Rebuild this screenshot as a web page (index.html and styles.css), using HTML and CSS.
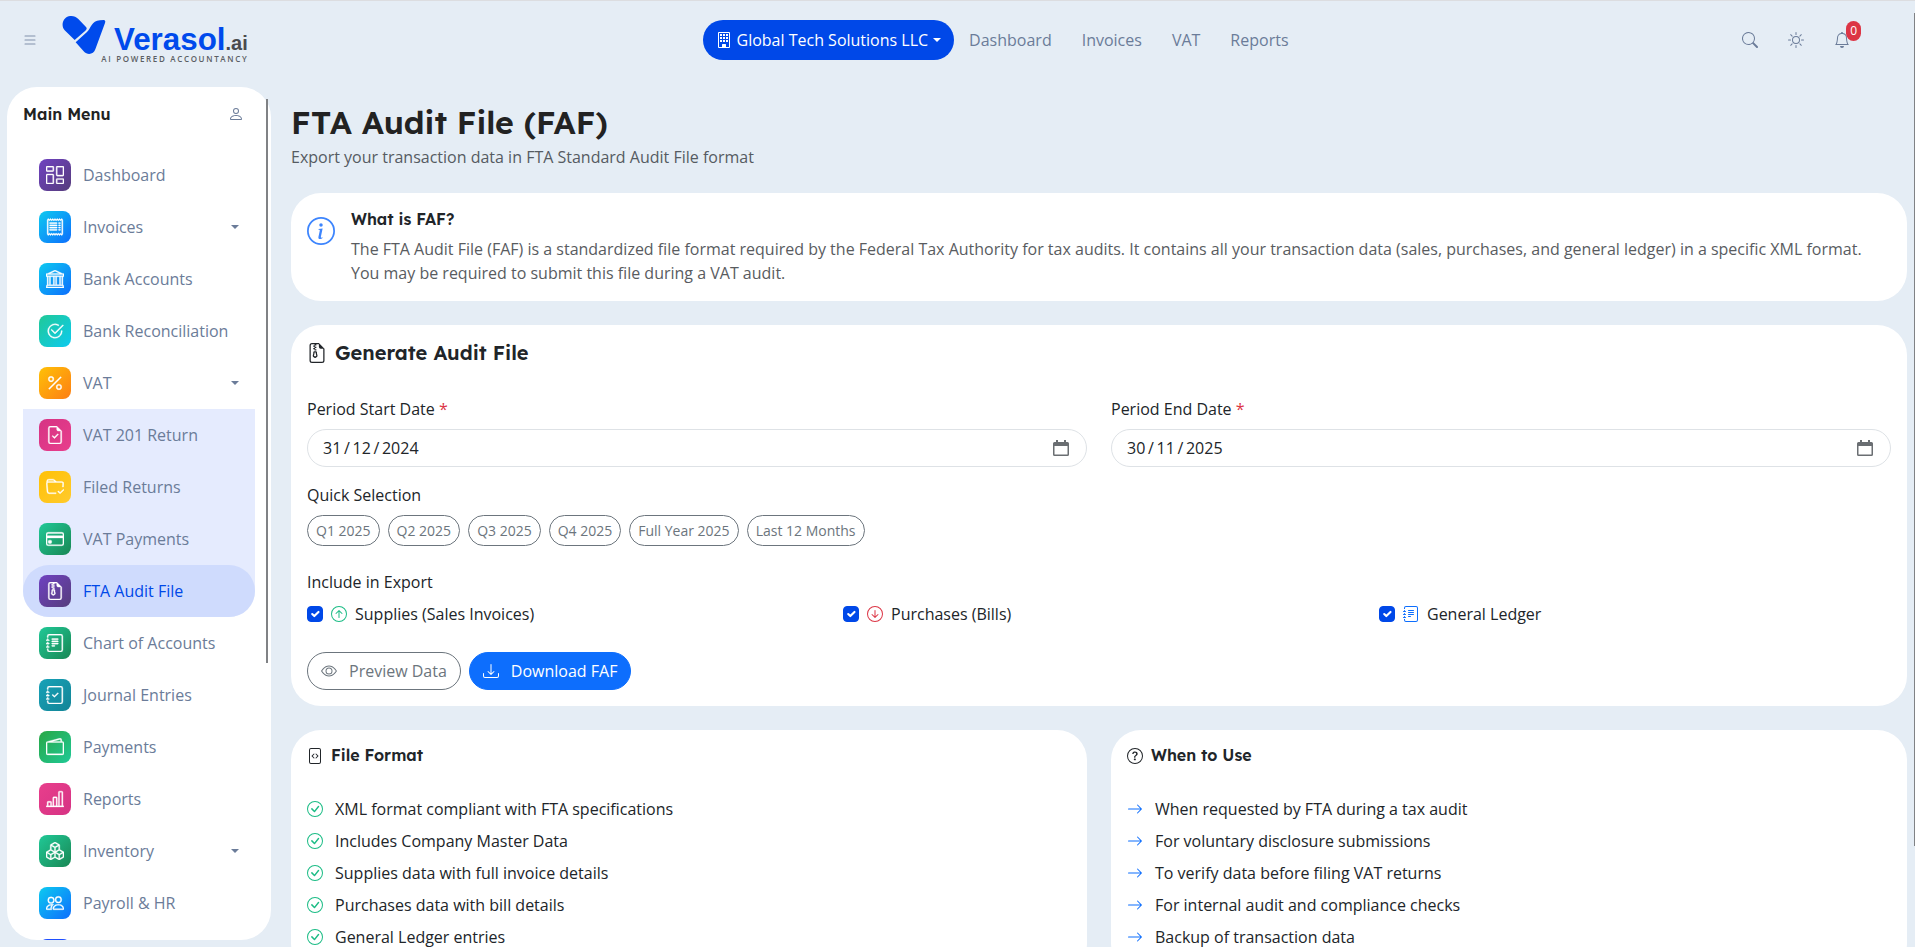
FILE: index.html
```html
<!DOCTYPE html>
<html lang="en-GB">

<head>
  <meta charset="utf-8">
  <meta name="viewport" content="width=device-width, initial-scale=1">
  <title>FTA Audit File (FAF)</title>
  <link rel="stylesheet" href="styles.css">
</head>

<body>
  <!-- icon sprite -->
  <svg class="sprite" aria-hidden="true">
    <symbol id="list" viewBox="0 0 16 16"><path d="M2.5 12a.5.5 0 0 1 .5-.5h10a.5.5 0 0 1 0 1H3a.5.5 0 0 1-.5-.5zm0-4a.5.5 0 0 1 .5-.5h10a.5.5 0 0 1 0 1H3a.5.5 0 0 1-.5-.5zm0-4a.5.5 0 0 1 .5-.5h10a.5.5 0 0 1 0 1H3a.5.5 0 0 1-.5-.5z"/></symbol>
    <symbol id="columns" viewBox="0 0 16 16"><path d="M6 1v3H1V1h5zM1 0a1 1 0 0 0-1 1v3a1 1 0 0 0 1 1h5a1 1 0 0 0 1-1V1a1 1 0 0 0-1-1H1zm14 12v3h-5v-3h5zm-5-1a1 1 0 0 0-1 1v3a1 1 0 0 0 1 1h5a1 1 0 0 0 1-1v-3a1 1 0 0 0-1-1h-5zM6 8v7H1V8h5zM1 7a1 1 0 0 0-1 1v7a1 1 0 0 0 1 1h5a1 1 0 0 0 1-1V8a1 1 0 0 0-1-1H1zm14-6v7h-5V1h5zm-5-1a1 1 0 0 0-1 1v7a1 1 0 0 0 1 1h5a1 1 0 0 0 1-1V1a1 1 0 0 0-1-1h-5z"/></symbol>
    <symbol id="receipt" viewBox="0 0 16 16"><path d="M1.92.506a.5.5 0 0 1 .434.14L3 1.293l.646-.647a.5.5 0 0 1 .708 0L5 1.293l.646-.647a.5.5 0 0 1 .708 0L7 1.293l.646-.647a.5.5 0 0 1 .708 0L9 1.293l.646-.647a.5.5 0 0 1 .708 0l.646.647.646-.647a.5.5 0 0 1 .708 0l.646.647.646-.647a.5.5 0 0 1 .801.13l.5 1A.5.5 0 0 1 15 2v12a.5.5 0 0 1-.053.224l-.5 1a.5.5 0 0 1-.8.13L13 14.707l-.646.647a.5.5 0 0 1-.708 0L11 14.707l-.646.647a.5.5 0 0 1-.708 0L9 14.707l-.646.647a.5.5 0 0 1-.708 0L7 14.707l-.646.647a.5.5 0 0 1-.708 0L5 14.707l-.646.647a.5.5 0 0 1-.708 0L3 14.707l-.646.647a.5.5 0 0 1-.801-.13l-.5-1A.5.5 0 0 1 1 14V2a.5.5 0 0 1 .053-.224l.5-1a.5.5 0 0 1 .367-.27zm.217 1.338L2 2.118v11.764l.137.274.51-.51a.5.5 0 0 1 .707 0l.646.647.646-.646a.5.5 0 0 1 .708 0l.646.646.646-.646a.5.5 0 0 1 .708 0l.646.646.646-.646a.5.5 0 0 1 .708 0l.646.646.646-.646a.5.5 0 0 1 .708 0l.646.646.646-.646a.5.5 0 0 1 .708 0l.509.509.137-.274V2.118l-.137-.274-.51.51a.5.5 0 0 1-.707 0L12 1.707l-.646.647a.5.5 0 0 1-.708 0L10 1.707l-.646.647a.5.5 0 0 1-.708 0L8 1.707l-.646.647a.5.5 0 0 1-.708 0L6 1.707l-.646.647a.5.5 0 0 1-.708 0L4 1.707l-.646.647a.5.5 0 0 1-.708 0l-.509-.51z"/><path d="M3 4.5a.5.5 0 0 1 .5-.5h6a.5.5 0 1 1 0 1h-6a.5.5 0 0 1-.5-.5zm0 2a.5.5 0 0 1 .5-.5h6a.5.5 0 1 1 0 1h-6a.5.5 0 0 1-.5-.5zm0 2a.5.5 0 0 1 .5-.5h6a.5.5 0 1 1 0 1h-6a.5.5 0 0 1-.5-.5zm0 2a.5.5 0 0 1 .5-.5h6a.5.5 0 0 1 0 1h-6a.5.5 0 0 1-.5-.5zm8-6a.5.5 0 0 1 .5-.5h1a.5.5 0 0 1 0 1h-1a.5.5 0 0 1-.5-.5zm0 2a.5.5 0 0 1 .5-.5h1a.5.5 0 0 1 0 1h-1a.5.5 0 0 1-.5-.5zm0 2a.5.5 0 0 1 .5-.5h1a.5.5 0 0 1 0 1h-1a.5.5 0 0 1-.5-.5zm0 2a.5.5 0 0 1 .5-.5h1a.5.5 0 0 1 0 1h-1a.5.5 0 0 1-.5-.5z"/></symbol>
    <symbol id="bank" viewBox="0 0 16 16"><path d="m8 0 6.61 3h.89a.5.5 0 0 1 .5.5v2a.5.5 0 0 1-.5.5H15v7a.5.5 0 0 1 .485.38l.5 2a.498.498 0 0 1-.485.62H.5a.498.498 0 0 1-.485-.62l.5-2A.501.501 0 0 1 1 13V6H.5a.5.5 0 0 1-.5-.5v-2A.5.5 0 0 1 .5 3h.89L8 0ZM3.777 3h8.447L8 1 3.777 3ZM2 6v7h1V6H2Zm2 0v7h2.5V6H4Zm3.5 0v7h1V6h-1Zm2 0v7H12V6H9.5ZM13 6v7h1V6h-1Zm2-1V4H1v1h14Zm-.39 9H1.39l-.25 1h13.72l-.25-1Z"/></symbol>
    <symbol id="check2" viewBox="0 0 16 16"><path d="M2.5 8a5.5 5.5 0 0 1 8.25-4.764.5.5 0 0 0 .5-.866A6.5 6.5 0 1 0 14.5 8a.5.5 0 0 0-1 0 5.5 5.5 0 1 1-11 0z"/><path d="M15.354 3.354a.5.5 0 0 0-.708-.708L8 9.293 5.354 6.646a.5.5 0 1 0-.708.708l3 3a.5.5 0 0 0 .708 0l7-7z"/></symbol>
    <symbol id="percent" viewBox="0 0 16 16"><path d="M13.442 2.558a.625.625 0 0 1 0 .884l-10 10a.625.625 0 1 1-.884-.884l10-10a.625.625 0 0 1 .884 0zM4.5 6a1.5 1.5 0 1 1 0-3 1.5 1.5 0 0 1 0 3zm0 1a2.5 2.5 0 1 0 0-5 2.5 2.5 0 0 0 0 5zm7 6a1.5 1.5 0 1 1 0-3 1.5 1.5 0 0 1 0 3zm0 1a2.5 2.5 0 1 0 0-5 2.5 2.5 0 0 0 0 5z"/></symbol>
    <symbol id="file-check" viewBox="0 0 16 16"><path d="M10.854 7.854a.5.5 0 0 0-.708-.708L7.5 9.793 6.354 8.646a.5.5 0 1 0-.708.708l1.5 1.5a.5.5 0 0 0 .708 0l3-3z"/><path d="M14 14V4.5L9.5 0H4a2 2 0 0 0-2 2v12a2 2 0 0 0 2 2h8a2 2 0 0 0 2-2zM9.5 3A1.5 1.5 0 0 0 11 4.5h2V14a1 1 0 0 1-1 1H4a1 1 0 0 1-1-1V2a1 1 0 0 1 1-1h5.5v2z"/></symbol>
    <symbol id="folder-check" viewBox="0 0 16 16"><path d="m.5 3 .04.87a1.99 1.99 0 0 0-.342 1.311l.637 7A2 2 0 0 0 2.826 14H9v-1H2.826a1 1 0 0 1-.995-.91l-.637-7A1 1 0 0 1 2.19 4h11.62a1 1 0 0 1 .996 1.09L14.54 8h1.005l.256-2.819A2 2 0 0 0 13.81 3H9.828a2 2 0 0 1-1.414-.586l-.828-.828A2 2 0 0 0 6.172 1H2.5a2 2 0 0 0-2 2zm5.672-1a1 1 0 0 1 .707.293L7.586 3H2.19c-.24 0-.47.042-.683.12L1.5 2.98a1 1 0 0 1 1-.98h3.672z"/><path d="M15.854 10.146a.5.5 0 0 1 0 .708l-3 3a.5.5 0 0 1-.708 0l-1.5-1.5a.5.5 0 0 1 .708-.708l1.146 1.147 2.646-2.647a.5.5 0 0 1 .708 0z"/></symbol>
    <symbol id="card" viewBox="0 0 16 16"><path d="M0 4a2 2 0 0 1 2-2h12a2 2 0 0 1 2 2v8a2 2 0 0 1-2 2H2a2 2 0 0 1-2-2V4zm2-1a1 1 0 0 0-1 1v1h14V4a1 1 0 0 0-1-1H2zm13 4H1v5a1 1 0 0 0 1 1h12a1 1 0 0 0 1-1V7z"/><path d="M2 10a1 1 0 0 1 1-1h1a1 1 0 0 1 1 1v1a1 1 0 0 1-1 1H3a1 1 0 0 1-1-1v-1z"/></symbol>
    <symbol id="zip" viewBox="0 0 16 16"><path d="M5 7.5a1 1 0 0 1 1-1h1a1 1 0 0 1 1 1v.938l.4 1.599a1 1 0 0 1-.416 1.074l-.93.62a1 1 0 0 1-1.11 0l-.929-.62a1 1 0 0 1-.415-1.074L5 8.438V7.5zm2 0H6v.938a1 1 0 0 1-.03.243l-.4 1.598.93.62.929-.62-.4-1.598A1 1 0 0 1 7 8.438V7.5z"/><path d="M14 4.5V14a2 2 0 0 1-2 2H4a2 2 0 0 1-2-2V2a2 2 0 0 1 2-2h5.5L14 4.5zm-3 0A1.5 1.5 0 0 1 9.5 3V1h-2v1h-1v1h1v1h-1v1h1v1H6V5H5V4h1V3H5V2h1V1H4a1 1 0 0 0-1 1v12a1 1 0 0 0 1 1h8a1 1 0 0 0 1-1V4.5h-2z"/></symbol>
    <symbol id="journal-text" viewBox="0 0 16 16"><path d="M5 10.5a.5.5 0 0 1 .5-.5h2a.5.5 0 0 1 0 1h-2a.5.5 0 0 1-.5-.5zm0-2a.5.5 0 0 1 .5-.5h5a.5.5 0 0 1 0 1h-5a.5.5 0 0 1-.5-.5zm0-2a.5.5 0 0 1 .5-.5h5a.5.5 0 0 1 0 1h-5a.5.5 0 0 1-.5-.5zm0-2a.5.5 0 0 1 .5-.5h5a.5.5 0 0 1 0 1h-5a.5.5 0 0 1-.5-.5z"/><path d="M3 0h10a2 2 0 0 1 2 2v12a2 2 0 0 1-2 2H3a2 2 0 0 1-2-2v-1h1v1a1 1 0 0 0 1 1h10a1 1 0 0 0 1-1V2a1 1 0 0 0-1-1H3a1 1 0 0 0-1 1v1H1V2a2 2 0 0 1 2-2z"/><path d="M1 5v-.5a.5.5 0 0 1 1 0V5h.5a.5.5 0 0 1 0 1h-2a.5.5 0 0 1 0-1H1zm0 3v-.5a.5.5 0 0 1 1 0V8h.5a.5.5 0 0 1 0 1h-2a.5.5 0 0 1 0-1H1zm0 3v-.5a.5.5 0 0 1 1 0v.5h.5a.5.5 0 0 1 0 1h-2a.5.5 0 0 1 0-1H1z"/></symbol>
    <symbol id="journal-check" viewBox="0 0 16 16"><path d="M10.854 6.146a.5.5 0 0 1 0 .708l-3 3a.5.5 0 0 1-.708 0l-1.5-1.5a.5.5 0 1 1 .708-.708L7.5 8.793l2.646-2.647a.5.5 0 0 1 .708 0z"/><path d="M3 0h10a2 2 0 0 1 2 2v12a2 2 0 0 1-2 2H3a2 2 0 0 1-2-2v-1h1v1a1 1 0 0 0 1 1h10a1 1 0 0 0 1-1V2a1 1 0 0 0-1-1H3a1 1 0 0 0-1 1v1H1V2a2 2 0 0 1 2-2z"/><path d="M1 5v-.5a.5.5 0 0 1 1 0V5h.5a.5.5 0 0 1 0 1h-2a.5.5 0 0 1 0-1H1zm0 3v-.5a.5.5 0 0 1 1 0V8h.5a.5.5 0 0 1 0 1h-2a.5.5 0 0 1 0-1H1zm0 3v-.5a.5.5 0 0 1 1 0v.5h.5a.5.5 0 0 1 0 1h-2a.5.5 0 0 1 0-1H1z"/></symbol>
    <symbol id="wallet" viewBox="0 0 16 16"><path d="M12.136.326A1.5 1.5 0 0 1 14 1.78V3h.5A1.5 1.5 0 0 1 16 4.5v9a1.5 1.5 0 0 1-1.5 1.5h-13A1.5 1.5 0 0 1 0 13.5v-9a1.5 1.5 0 0 1 1.432-1.499L12.136.326zM5.562 3H13V1.78a.5.5 0 0 0-.621-.484L5.562 3zM1.5 4a.5.5 0 0 0-.5.5v9a.5.5 0 0 0 .5.5h13a.5.5 0 0 0 .5-.5v-9a.5.5 0 0 0-.5-.5h-13z"/></symbol>
    <symbol id="chart" viewBox="0 0 16 16"><path d="M11 2a1 1 0 0 1 1-1h2a1 1 0 0 1 1 1v12h.5a.5.5 0 0 1 0 1H.5a.5.5 0 0 1 0-1H1v-3a1 1 0 0 1 1-1h2a1 1 0 0 1 1 1v3h1V7a1 1 0 0 1 1-1h2a1 1 0 0 1 1 1v7h1V2zm1 12h2V2h-2v12zm-3 0V7H7v7h2zm-5 0v-3H2v3h2z"/></symbol>
    <symbol id="boxes" viewBox="0 0 16 16"><path d="M7.752.066a.5.5 0 0 1 .496 0l3.75 2.143a.5.5 0 0 1 .252.434v3.995l3.498 2A.5.5 0 0 1 16 9.07v4.286a.5.5 0 0 1-.252.434l-3.75 2.143a.5.5 0 0 1-.496 0l-3.502-2-3.502 2.001a.5.5 0 0 1-.496 0l-3.75-2.143A.5.5 0 0 1 0 13.357V9.071a.5.5 0 0 1 .252-.434L3.75 6.638V2.643a.5.5 0 0 1 .252-.434L7.752.066ZM4.25 7.504 1.508 9.071l2.742 1.567 2.742-1.567L4.25 7.504ZM7.5 9.933l-2.75 1.571v3.134l2.75-1.571V9.933Zm1 3.134 2.75 1.571v-3.134L8.5 9.933v3.134Zm.508-3.996 2.742 1.567 2.742-1.567-2.742-1.567-2.742 1.567Zm2.242-2.433V3.504L8.5 5.076V8.21l2.75-1.572ZM7.5 8.21V5.076L4.75 3.504v3.134L7.5 8.21ZM5.258 2.643 8 4.21l2.742-1.567L8 1.076 5.258 2.643ZM15 9.933l-2.75 1.571v3.134L15 13.067V9.933ZM3.75 14.638v-3.134L1 9.933v3.134l2.75 1.571Z"/></symbol>
    <symbol id="people" viewBox="0 0 16 16"><path d="M15 14s1 0 1-1-1-4-5-4-5 3-5 4 1 1 1 1h8Zm-7.978-1A.261.261 0 0 1 7 12.996c.001-.264.167-1.03.76-1.72C8.312 10.629 9.282 10 11 10c1.717 0 2.687.63 3.24 1.276.593.69.758 1.457.76 1.72l-.008.002a.274.274 0 0 1-.014.002H7.022ZM11 7a2 2 0 1 0 0-4 2 2 0 0 0 0 4Zm3-2a3 3 0 1 1-6 0 3 3 0 0 1 6 0ZM6.936 9.28a5.88 5.88 0 0 0-1.23-.247A7.35 7.35 0 0 0 5 9c-4 0-5 3-5 4 0 .667.333 1 1 1h4.216A2.238 2.238 0 0 1 5 13c0-1.01.377-2.042 1.09-2.904.243-.294.526-.569.846-.816ZM4.92 10A5.493 5.493 0 0 0 4 13H1c0-.26.164-1.03.76-1.724.545-.636 1.492-1.256 3.16-1.275ZM1.5 5.5a3 3 0 1 1 6 0 3 3 0 0 1-6 0Zm3-2a2 2 0 1 0 0 4 2 2 0 0 0 0-4Z"/></symbol>
    <symbol id="person" viewBox="0 0 16 16"><path d="M8 8a3 3 0 1 0 0-6 3 3 0 0 0 0 6Zm2-3a2 2 0 1 1-4 0 2 2 0 0 1 4 0Zm4 8c0 1-1 1-1 1H3s-1 0-1-1 1-4 6-4 6 3 6 4Zm-1-.004c-.001-.246-.154-.986-.832-1.664C11.516 10.68 10.289 10 8 10c-2.29 0-3.516.68-4.168 1.332-.678.678-.83 1.418-.832 1.664h10Z"/></symbol>
    <symbol id="building" viewBox="0 0 16 16"><path d="M2 1a1 1 0 0 1 1-1h10a1 1 0 0 1 1 1v14a1 1 0 0 1-1 1H3a1 1 0 0 1-1-1V1zm11 0H3v14h3v-2.5a.5.5 0 0 1 .5-.5h3a.5.5 0 0 1 .5.5V15h3V1z"/><path d="M4 2h2v2H4zM7 2h2v2H7zM10 2h2v2h-2zM4 5h2v2H4zM7 5h2v2H7zM10 5h2v2h-2zM4 8h2v2H4zM7 8h2v2H7zM10 8h2v2h-2z"/></symbol>
    <symbol id="search" viewBox="0 0 16 16"><path d="M11.742 10.344a6.5 6.5 0 1 0-1.397 1.398h-.001c.03.04.062.078.098.115l3.85 3.85a1 1 0 0 0 1.415-1.414l-3.85-3.85a1.007 1.007 0 0 0-.115-.1zM12 6.5a5.5 5.5 0 1 1-11 0 5.5 5.5 0 0 1 11 0z"/></symbol>
    <symbol id="sun" viewBox="0 0 16 16"><path d="M8 11a3 3 0 1 1 0-6 3 3 0 0 1 0 6zm0 1a4 4 0 1 0 0-8 4 4 0 0 0 0 8zM8 0a.5.5 0 0 1 .5.5v2a.5.5 0 0 1-1 0v-2A.5.5 0 0 1 8 0zm0 13a.5.5 0 0 1 .5.5v2a.5.5 0 0 1-1 0v-2A.5.5 0 0 1 8 13zm8-5a.5.5 0 0 1-.5.5h-2a.5.5 0 0 1 0-1h2a.5.5 0 0 1 .5.5zM3 8a.5.5 0 0 1-.5.5h-2a.5.5 0 0 1 0-1h2A.5.5 0 0 1 3 8zm10.657-5.657a.5.5 0 0 1 0 .707l-1.414 1.415a.5.5 0 1 1-.707-.708l1.414-1.414a.5.5 0 0 1 .707 0zm-9.193 9.193a.5.5 0 0 1 0 .707L3.05 13.657a.5.5 0 0 1-.707-.707l1.414-1.414a.5.5 0 0 1 .707 0zm9.193 2.121a.5.5 0 0 1-.707 0l-1.414-1.414a.5.5 0 0 1 .707-.707l1.414 1.414a.5.5 0 0 1 0 .707zM4.464 4.465a.5.5 0 0 1-.707 0L2.343 3.05a.5.5 0 1 1 .707-.707l1.414 1.414a.5.5 0 0 1 0 .708z"/></symbol>
    <symbol id="bell" viewBox="0 0 16 16"><path d="M8 16a2 2 0 0 0 2-2H6a2 2 0 0 0 2 2zM8 1.918l-.797.161A4.002 4.002 0 0 0 4 6c0 .628-.134 2.197-.459 3.742-.16.767-.376 1.566-.663 2.258h10.244c-.287-.692-.502-1.49-.663-2.258C12.134 8.197 12 6.628 12 6a4.002 4.002 0 0 0-3.203-3.92L8 1.917zM14.22 12c.223.447.481.801.78 1H1c.299-.199.557-.553.78-1C2.68 10.2 3 6.88 3 6c0-2.42 1.72-4.44 4.005-4.901a1 1 0 1 1 1.99 0A5.002 5.002 0 0 1 13 6c0 .88.32 4.2 1.22 6z"/></symbol>
    <symbol id="info" viewBox="0 0 16 16"><path d="M8 15A7 7 0 1 1 8 1a7 7 0 0 1 0 14zm0 1A8 8 0 1 0 8 0a8 8 0 0 0 0 16z"/><path d="m8.93 6.588-2.29.287-.082.38.45.083c.294.07.352.176.288.469l-.738 3.468c-.194.897.105 1.319.808 1.319.545 0 1.178-.252 1.465-.598l.088-.416c-.2.176-.492.246-.686.246-.275 0-.375-.193-.304-.533L8.93 6.588zM9 4.5a1 1 0 1 1-2 0 1 1 0 0 1 2 0z"/></symbol>
    <symbol id="calendar" viewBox="0 0 16 16"><path d="M3 0h2v2h6V0h2v2h1.5A1.5 1.5 0 0 1 16 3.5v11a1.5 1.5 0 0 1-1.5 1.5h-13A1.5 1.5 0 0 1 0 14.5v-11A1.5 1.5 0 0 1 1.5 2H3V0zM1.5 6v8.5h13V6h-13z"/></symbol>
    <symbol id="arrow-up" viewBox="0 0 16 16"><path d="M1 8a7 7 0 1 0 14 0A7 7 0 0 0 1 8zm15 0A8 8 0 1 1 0 8a8 8 0 0 1 16 0zm-7.5 3.5a.5.5 0 0 1-1 0V5.707L5.354 7.854a.5.5 0 1 1-.708-.708l3-3a.5.5 0 0 1 .708 0l3 3a.5.5 0 0 1-.708.708L8.5 5.707V11.5z"/></symbol>
    <symbol id="arrow-down" viewBox="0 0 16 16"><path d="M1 8a7 7 0 1 0 14 0A7 7 0 0 0 1 8zm15 0A8 8 0 1 1 0 8a8 8 0 0 1 16 0zM8.5 4.5a.5.5 0 0 0-1 0v5.793L5.354 8.146a.5.5 0 1 0-.708.708l3 3a.5.5 0 0 0 .708 0l3-3a.5.5 0 0 0-.708-.708L8.5 10.293V4.5z"/></symbol>
    <symbol id="eye" viewBox="0 0 16 16"><path d="M16 8s-3-5.5-8-5.5S0 8 0 8s3 5.5 8 5.5S16 8 16 8zM1.173 8a13.133 13.133 0 0 1 1.66-2.043C4.12 4.668 5.88 3.5 8 3.5c2.12 0 3.879 1.168 5.168 2.457A13.133 13.133 0 0 1 14.828 8c-.058.087-.122.183-.195.288-.335.48-.83 1.12-1.465 1.755C11.879 11.332 10.119 12.5 8 12.5c-2.12 0-3.879-1.168-5.168-2.457A13.134 13.134 0 0 1 1.172 8z"/><path d="M8 5.5a2.5 2.5 0 1 0 0 5 2.5 2.5 0 0 0 0-5zM4.5 8a3.5 3.5 0 1 1 7 0 3.5 3.5 0 0 1-7 0z"/></symbol>
    <symbol id="download" viewBox="0 0 16 16"><path d="M.5 9.9a.5.5 0 0 1 .5.5v2.5a1 1 0 0 0 1 1h12a1 1 0 0 0 1-1v-2.5a.5.5 0 0 1 1 0v2.5a2 2 0 0 1-2 2H2a2 2 0 0 1-2-2v-2.5a.5.5 0 0 1 .5-.5z"/><path d="M7.646 11.854a.5.5 0 0 0 .708 0l3-3a.5.5 0 0 0-.708-.708L8.5 10.293V1.5a.5.5 0 0 0-1 0v8.793L5.354 8.146a.5.5 0 1 0-.708.708l3 3z"/></symbol>
    <symbol id="file-code" viewBox="0 0 16 16"><path d="M6.646 5.646a.5.5 0 1 1 .708.708L5.707 8l1.647 1.646a.5.5 0 0 1-.708.708l-2-2a.5.5 0 0 1 0-.708l2-2zm2.708 0a.5.5 0 1 0-.708.708L10.293 8 8.646 9.646a.5.5 0 0 0 .708.708l2-2a.5.5 0 0 0 0-.708l-2-2z"/><path d="M2 2a2 2 0 0 1 2-2h8a2 2 0 0 1 2 2v12a2 2 0 0 1-2 2H4a2 2 0 0 1-2-2V2zm10-1H4a1 1 0 0 0-1 1v12a1 1 0 0 0 1 1h8a1 1 0 0 0 1-1V2a1 1 0 0 0-1-1z"/></symbol>
    <symbol id="question" viewBox="0 0 16 16"><path d="M8 15A7 7 0 1 1 8 1a7 7 0 0 1 0 14zm0 1A8 8 0 1 0 8 0a8 8 0 0 0 0 16z"/><path d="M5.255 5.786a.237.237 0 0 0 .241.247h.825c.138 0 .248-.113.266-.25.09-.656.54-1.134 1.342-1.134.686 0 1.314.343 1.314 1.168 0 .635-.374.927-.965 1.371-.673.489-1.206 1.06-1.168 1.987l.003.217a.25.25 0 0 0 .25.246h.811a.25.25 0 0 0 .25-.25v-.105c0-.718.273-.927 1.01-1.486.609-.463 1.244-.977 1.244-2.056 0-1.511-1.276-2.241-2.673-2.241-1.267 0-2.655.59-2.75 2.286zm1.557 5.763c0 .533.425.927 1.01.927.609 0 1.028-.394 1.028-.927 0-.552-.42-.94-1.029-.94-.584 0-1.009.388-1.009.94z"/></symbol>
    <symbol id="check" viewBox="0 0 16 16"><path d="M8 15A7 7 0 1 1 8 1a7 7 0 0 1 0 14zm0 1A8 8 0 1 0 8 0a8 8 0 0 0 0 16z"/><path d="M10.97 4.97a.235.235 0 0 0-.02.022L7.477 9.417 5.384 7.323a.75.75 0 0 0-1.06 1.06L6.97 11.03a.75.75 0 0 0 1.079-.02l3.992-4.99a.75.75 0 0 0-1.071-1.05z"/></symbol>
    <symbol id="arrow-right" viewBox="0 0 16 16"><path d="M1 8a.5.5 0 0 1 .5-.5h11.793l-3.147-3.146a.5.5 0 0 1 .708-.708l4 4a.5.5 0 0 1 0 .708l-4 4a.5.5 0 0 1-.708-.708L13.293 8.5H1.5A.5.5 0 0 1 1 8z"/></symbol>
  </svg>

  <header class="header">
    <div class="brand">
      <button class="icon-btn menu-toggle" aria-label="Toggle menu"><svg class="icon"><use href="#list"/></svg></button>
      <a href="#" class="logo">
        <svg viewBox="186 48 570 150" role="img" aria-label="Verasol.ai">
          <g class="logo-mark">
            <path d="M224 123 L194 94 C182 80 188 58 206 52 C217 49 227 52 235 60 L258 84 Q263 90 256 95 Z"/>
            <path d="M227 130 L261 99 C273 88 274 66 300 64 L311 63 Q318 64 315 72 L286 151 C281 166 263 170 251 157 Z"/>
          </g>
          <text class="logo-name" x="342" y="153">Verasol<tspan class="logo-suffix">.ai</tspan></text>
          <text class="logo-tag" x="304" y="188">AI POWERED ACCOUNTANCY</text>
        </svg>
      </a>
    </div>

    <nav class="top-nav">
      <button class="company-btn">
        <svg class="icon"><use href="#building"/></svg>
        <span>Global Tech Solutions LLC</span>
        <span class="caret"></span>
      </button>
      <a href="#">Dashboard</a>
      <a href="#">Invoices</a>
      <a href="#">VAT</a>
      <a href="#">Reports</a>
    </nav>

    <div class="tools">
      <button class="icon-btn" aria-label="Search"><svg class="icon"><use href="#search"/></svg></button>
      <button class="icon-btn" aria-label="Theme"><svg class="icon"><use href="#sun"/></svg></button>
      <button class="icon-btn" aria-label="Notifications"><svg class="icon"><use href="#bell"/></svg><span class="badge">0</span></button>
    </div>
  </header>

  <div class="layout">
    <aside class="sidebar">
      <div class="sidebar-head">
        <h2>Main Menu</h2>
        <svg class="icon"><use href="#person"/></svg>
      </div>
      <nav class="menu">
        <a href="#"><span class="tile purple"><svg><use href="#columns"/></svg></span>Dashboard</a>
        <a href="#"><span class="tile blue"><svg><use href="#receipt"/></svg></span>Invoices<span class="caret"></span></a>
        <a href="#"><span class="tile blue"><svg><use href="#bank"/></svg></span>Bank Accounts</a>
        <a href="#"><span class="tile aqua"><svg><use href="#check2"/></svg></span>Bank Reconciliation</a>
        <a href="#"><span class="tile orange"><svg><use href="#percent"/></svg></span>VAT<span class="caret"></span></a>
        <div class="submenu">
          <a href="#"><span class="tile magenta"><svg><use href="#file-check"/></svg></span>VAT 201 Return</a>
          <a href="#"><span class="tile yellow"><svg><use href="#folder-check"/></svg></span>Filed Returns</a>
          <a href="#"><span class="tile green"><svg><use href="#card"/></svg></span>VAT Payments</a>
          <a href="#" class="active"><span class="tile purple"><svg><use href="#zip"/></svg></span>FTA Audit File</a>
        </div>
        <a href="#"><span class="tile green"><svg><use href="#journal-text"/></svg></span>Chart of Accounts</a>
        <a href="#"><span class="tile teal"><svg><use href="#journal-check"/></svg></span>Journal Entries</a>
        <a href="#"><span class="tile lime"><svg><use href="#wallet"/></svg></span>Payments</a>
        <a href="#"><span class="tile pink"><svg><use href="#chart"/></svg></span>Reports</a>
        <a href="#"><span class="tile green"><svg><use href="#boxes"/></svg></span>Inventory<span class="caret"></span></a>
        <a href="#"><span class="tile blue"><svg><use href="#people"/></svg></span>Payroll &amp; HR</a>
        <a href="#" aria-label="More"><span class="tile royal"></span></a>
      </nav>
    </aside>
    <div class="scroll-thumb sidebar-thumb"></div>

    <main class="content">
      <div class="page-title">
        <h1>FTA Audit File (FAF)</h1>
        <p>Export your transaction data in FTA Standard Audit File format</p>
      </div>

      <section class="card info-card">
        <svg class="info-icon"><use href="#info"/></svg>
        <div>
          <h3>What is FAF?</h3>
          <p>The FTA Audit File (FAF) is a standardized file format required by the Federal Tax Authority for tax audits. It contains all your transaction data (sales, purchases, and general ledger) in a specific XML format. You may be required to submit this file during a VAT audit.</p>
        </div>
      </section>

      <section class="card">
        <h2 class="card-head card-head-lg"><svg class="icon"><use href="#zip"/></svg>Generate Audit File</h2>
        <form class="card-body">
          <div class="row row-2">
            <div>
              <label for="start">Period Start Date <span class="required">*</span></label>
              <div class="date-field">
                <input type="text" id="start" value="31&#8201;/&#8201;12&#8201;/&#8201;2024">
                <button type="button" aria-label="Choose start date"><svg class="icon"><use href="#calendar"/></svg></button>
              </div>
            </div>
            <div>
              <label for="end">Period End Date <span class="required">*</span></label>
              <div class="date-field">
                <input type="text" id="end" value="30&#8201;/&#8201;11&#8201;/&#8201;2025">
                <button type="button" aria-label="Choose end date"><svg class="icon"><use href="#calendar"/></svg></button>
              </div>
            </div>
          </div>

          <div class="group quick">
            <p class="group-label">Quick Selection</p>
            <div class="chips">
              <button type="button">Q1 2025</button>
              <button type="button">Q2 2025</button>
              <button type="button">Q3 2025</button>
              <button type="button">Q4 2025</button>
              <button type="button">Full Year 2025</button>
              <button type="button">Last 12 Months</button>
            </div>
          </div>

          <div class="group">
            <p class="group-label">Include in Export</p>
            <div class="row row-3">
              <div class="option">
                <input type="checkbox" id="supplies" checked>
                <label for="supplies"><svg class="icon text-green"><use href="#arrow-up"/></svg>Supplies (Sales Invoices)</label>
              </div>
              <div class="option">
                <input type="checkbox" id="purchases" checked>
                <label for="purchases"><svg class="icon text-red"><use href="#arrow-down"/></svg>Purchases (Bills)</label>
              </div>
              <div class="option">
                <input type="checkbox" id="ledger" checked>
                <label for="ledger"><svg class="icon text-blue"><use href="#journal-text"/></svg>General Ledger</label>
              </div>
            </div>
          </div>

          <div class="actions">
            <button type="button" class="btn btn-outline"><svg class="icon"><use href="#eye"/></svg>Preview Data</button>
            <button type="button" class="btn btn-primary"><svg class="icon"><use href="#download"/></svg>Download FAF</button>
          </div>
        </form>
      </section>

      <div class="row row-2">
        <section class="card">
          <h3 class="card-head"><svg class="icon"><use href="#file-code"/></svg>File Format</h3>
          <ul class="card-body list list-green">
            <li><svg class="icon"><use href="#check"/></svg>XML format compliant with FTA specifications</li>
            <li><svg class="icon"><use href="#check"/></svg>Includes Company Master Data</li>
            <li><svg class="icon"><use href="#check"/></svg>Supplies data with full invoice details</li>
            <li><svg class="icon"><use href="#check"/></svg>Purchases data with bill details</li>
            <li><svg class="icon"><use href="#check"/></svg>General Ledger entries</li>
          </ul>
        </section>
        <section class="card">
          <h3 class="card-head"><svg class="icon"><use href="#question"/></svg>When to Use</h3>
          <ul class="card-body list list-blue">
            <li><svg class="icon"><use href="#arrow-right"/></svg>When requested by FTA during a tax audit</li>
            <li><svg class="icon"><use href="#arrow-right"/></svg>For voluntary disclosure submissions</li>
            <li><svg class="icon"><use href="#arrow-right"/></svg>To verify data before filing VAT returns</li>
            <li><svg class="icon"><use href="#arrow-right"/></svg>For internal audit and compliance checks</li>
            <li><svg class="icon"><use href="#arrow-right"/></svg>Backup of transaction data</li>
          </ul>
        </section>
      </div>
    </main>
  </div>
  <div class="scroll-thumb page-thumb"></div>
</body>

</html>
```
FILE: styles.css
```css
* {
  box-sizing: border-box;
}

body {
  margin: 0;
  height: 100vh;
  display: flex;
  flex-direction: column;
  overflow: hidden;
  border-top: 1px solid #dcdde0;
  background: #e5edf5;
  color: #212529;
  font-family: "Open Sans", sans-serif;
  font-size: 16px;
  line-height: 24px;
}

h1, h2, h3, p, ul {
  margin: 0;
  padding: 0;
}

h1, h2, h3 {
  font-family: Lexend, Inter, sans-serif;
  font-weight: 600;
}

h2, h3 {
  font-size: 16px;
  line-height: 20px;
}

a {
  color: inherit;
  text-decoration: none;
}

button, input {
  font: inherit;
  color: inherit;
}

button {
  background: none;
  border: none;
  padding: 0;
  cursor: pointer;
}

svg {
  fill: currentColor;
}

.sprite {
  display: none;
}

.icon {
  width: 16px;
  height: 16px;
  flex: none;
}

.caret {
  border-top: 4px solid;
  border-left: 4px solid transparent;
  border-right: 4px solid transparent;
}

/* header */
.header {
  display: flex;
  align-items: center;
  flex: none;
  height: 78px;
  color: #6b7c99;
}

.brand {
  display: flex;
  align-items: center;
  gap: 16px;
  width: 279px;
  padding-left: 14px;
}

.icon-btn {
  position: relative;
  display: flex;
  align-items: center;
  justify-content: center;
  width: 46px;
  height: 40px;
}

.menu-toggle {
  width: 32px;
  opacity: 0.8;
}

.logo svg {
  display: block;
  width: 190px;
  height: 50px;
}

.logo-mark,
.logo-name {
  fill: #004aec;
}

.logo-name {
  font: bold 94px "Liberation Sans", Arial, sans-serif;
}

.logo-suffix {
  font: bold 60px "Liberation Sans", Arial, sans-serif;
  fill: #4b4b4d;
}

.logo-tag {
  font: 600 24px "Open Sans", sans-serif;
  letter-spacing: 5px;
  fill: #5b5e63;
}

.top-nav {
  flex: 1;
  display: flex;
  justify-content: center;
  align-items: center;
}

.top-nav a {
  padding: 8px 15px;
}

.company-btn {
  display: flex;
  align-items: center;
  gap: 5px;
  height: 40px;
  padding: 0 13px;
  border-radius: 20px;
  background: #0048e8;
  color: #fff;
}

.tools {
  display: flex;
  padding-right: 50px;
}

.badge {
  position: absolute;
  top: 1px;
  right: 4px;
  padding: 0 4px;
  border-radius: 8px;
  background: #dc3545;
  color: #fff;
  font-size: 12px;
  line-height: 20px;
}

/* sidebar */
.layout {
  flex: 1;
  min-height: 0;
  display: flex;
  position: relative;
}

.sidebar {
  flex: none;
  width: 264px;
  margin: 8px 0 7px 7px;
  padding: 16px 16px 0;
  border-radius: 30px;
  background: #fff;
  overflow: hidden;
}

.sidebar-head {
  display: flex;
  align-items: center;
  justify-content: space-between;
  height: 22px;
  padding-right: 11px;
  margin-bottom: 24px;
  color: #6b7c99;
}

.sidebar-head h2 {
  color: #222;
}

.menu a {
  display: flex;
  align-items: center;
  gap: 12px;
  height: 52px;
  padding: 0 16px;
  color: #6b7c99;
}

.menu .caret {
  margin-left: auto;
}

.submenu {
  border-radius: 0 0 26px 26px;
  background: #e5ebfe;
}

.menu .active {
  border-radius: 26px;
  background: #cfdbfd;
  color: #0048e8;
}

.tile {
  display: flex;
  align-items: center;
  justify-content: center;
  width: 32px;
  height: 32px;
  border-radius: 8px;
  color: #fff;
}

.tile svg {
  width: 18px;
  height: 18px;
  stroke: currentColor;
  stroke-width: 0.3;
}

.purple { background: linear-gradient(135deg, #6f42c1, #563d7c); }
.blue { background: linear-gradient(135deg, #0dcaf0, #0d6efd); }
.aqua { background: linear-gradient(135deg, #20c997, #0dcaf0); }
.orange { background: linear-gradient(135deg, #ffc107, #fd7e14); }
.magenta { background: linear-gradient(135deg, #d63384, #e83e8c); }
.yellow { background: linear-gradient(135deg, #ffc107, #ffca2c); }
.green { background: linear-gradient(135deg, #20c997, #198754); }
.teal { background: linear-gradient(135deg, #17a2b8, #138496); }
.lime { background: linear-gradient(135deg, #28a745, #20c997); }
.pink { background: linear-gradient(135deg, #e83e8c, #d63384); }
.royal { background: #1f4fff; }

/* scroll thumbs lie over the page edge */
.scroll-thumb {
  position: absolute;
  background: #808285;
}

.sidebar-thumb {
  top: 20px;
  left: 266px;
  width: 2px;
  height: 65%;
}

.page-thumb {
  top: 13px;
  right: 0;
  width: 1px;
  height: 88%;
}

/* content */
.content {
  flex: 1;
  min-width: 0;
  padding: 24px 8px 24px 20px;
  overflow-y: auto;
  scrollbar-width: none;
  display: flex;
  flex-direction: column;
  gap: 24px;
}

.page-title h1 {
  font-size: 32px;
  line-height: 38px;
  color: #222;
}

.page-title p {
  margin-top: 4px;
  color: #555b62;
}

.card {
  border-radius: 30px;
  background: #fff;
}

.info-card {
  display: flex;
  gap: 16px;
  padding: 16px;
}

.info-icon {
  flex: none;
  width: 28px;
  height: 28px;
  margin-top: 8px;
  color: #3d85fd;
}

.info-card p {
  margin-top: 8px;
  color: #595c5f;
}

.card-head {
  display: flex;
  align-items: center;
  gap: 8px;
  padding: 16px;
  line-height: 19px;
}

.card-head-lg {
  font-size: 20px;
  line-height: 24px;
}

.card-head-lg .icon {
  width: 20px;
  height: 20px;
}

.card-body {
  padding: 16px;
}

.row {
  display: grid;
  gap: 24px;
}

.row-2 {
  grid-template-columns: 1fr 1fr;
}

.row-3 {
  grid-template-columns: 1fr 1fr 1fr;
}

.required,
.text-red {
  color: #dc3545;
}

.text-green {
  color: #1bbc85;
}

.text-blue {
  color: #0d6efd;
}

.date-field {
  display: flex;
  align-items: center;
  height: 38px;
  margin-top: 8px;
  padding: 0 17px 0 15px;
  border: 1px solid #dee2e6;
  border-radius: 19px;
}

.date-field input {
  flex: 1;
  min-width: 0;
  padding: 0;
  border: none;
  outline: none;
  background: none;
}

.date-field button {
  display: flex;
  color: #6a6e72;
}

.group {
  margin-top: 24px;
}

.quick {
  margin-top: 16px;
}

.group-label {
  margin-bottom: 8px;
}

.chips,
.actions {
  display: flex;
  gap: 8px;
}

.chips button {
  padding: 4px 8px;
  border: 1px solid #6c757d;
  border-radius: 16px;
  color: #6c757d;
  font-size: 14px;
  line-height: 21px;
}

.option {
  display: flex;
  align-items: center;
  gap: 8px;
}

.option label {
  display: flex;
  align-items: center;
  gap: 8px;
}

.option input {
  appearance: none;
  width: 16px;
  height: 16px;
  margin: 0;
  border: 1px solid #dee2e6;
  border-radius: 4px;
}

.option input:checked {
  border-color: #0048e8;
  background: #0048e8 url("data:image/svg+xml,%3csvg xmlns='http://www.w3.org/2000/svg' viewBox='0 0 20 20'%3e%3cpath fill='none' stroke='%23fff' stroke-linecap='round' stroke-linejoin='round' stroke-width='3' d='m6 10 3 3 6-6'/%3e%3c/svg%3e") center / contain no-repeat;
}

.actions {
  margin-top: 26px;
}

.btn {
  display: flex;
  align-items: center;
  gap: 12px;
  height: 38px;
  padding: 0 13px;
  border: 1px solid;
  border-radius: 19px;
}

.btn-outline {
  border-color: #6c757d;
  color: #6c757d;
}

.btn-primary {
  border-color: #0d6efd;
  background: #0d6efd;
  color: #fff;
}

.list {
  list-style: none;
}

.list li {
  display: flex;
  align-items: center;
  gap: 12px;
  margin-bottom: 8px;
}

.list-green .icon {
  color: #1bbc85;
}

.list-blue .icon {
  color: #0d6efd;
}
```
